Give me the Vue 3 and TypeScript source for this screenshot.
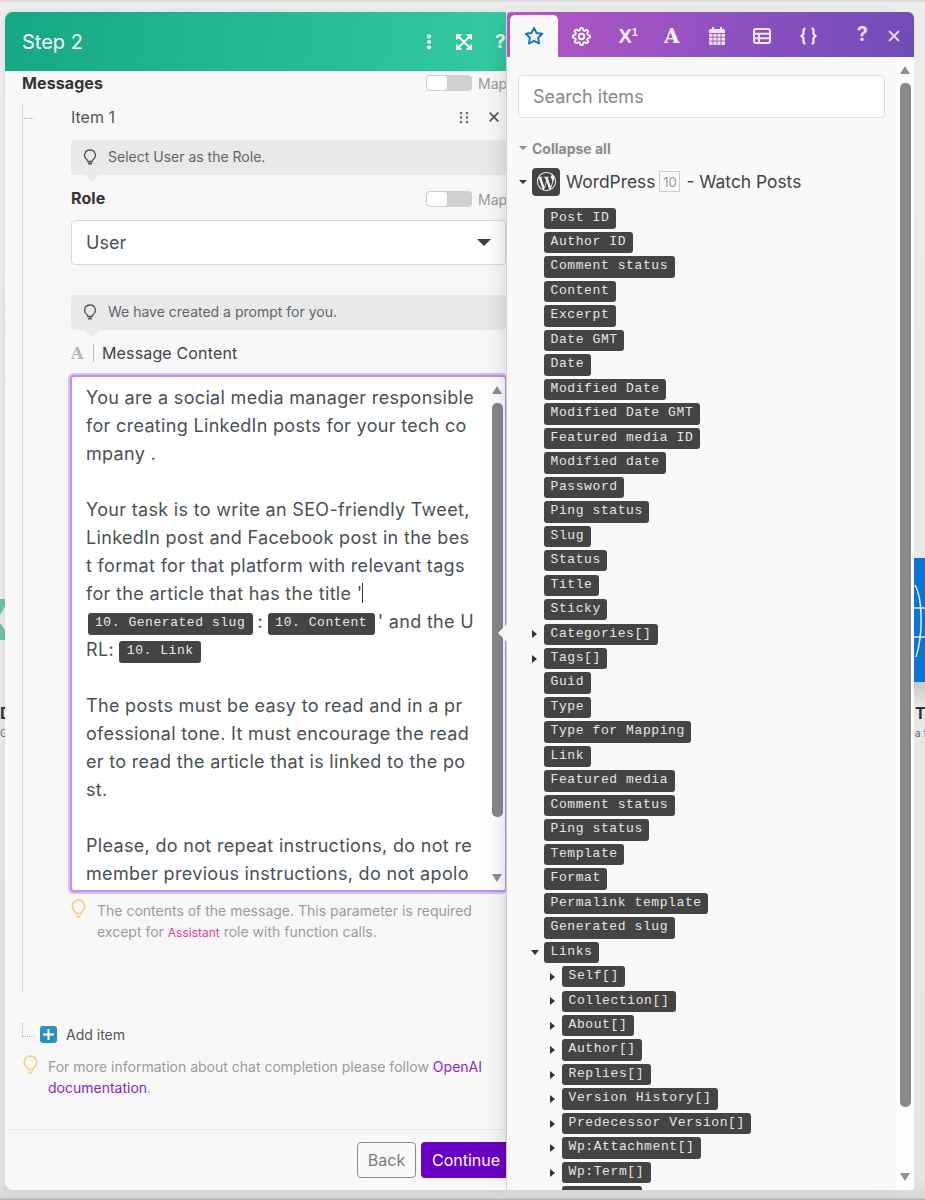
<script setup lang="ts">
interface TreeRow { label: string; depth: number; caret: '' | 'right' | 'down' }

const flat = (labels: string[]): TreeRow[] => labels.map((label) => ({ label, depth: 0, caret: '' }))
const child = (label: string): TreeRow => ({ label, depth: 1, caret: 'right' })

const rows: TreeRow[] = [
  ...flat(['Post ID', 'Author ID', 'Comment status', 'Content', 'Excerpt', 'Date GMT', 'Date', 'Modified Date', 'Modified Date GMT', 'Featured media ID', 'Modified date', 'Password', 'Ping status', 'Slug', 'Status', 'Title', 'Sticky']),
  { label: 'Categories[]', depth: 0, caret: 'right' },
  { label: 'Tags[]', depth: 0, caret: 'right' },
  ...flat(['Guid', 'Type', 'Type for Mapping', 'Link', 'Featured media', 'Comment status', 'Ping status', 'Template', 'Format', 'Permalink template', 'Generated slug']),
  { label: 'Links', depth: 0, caret: 'down' },
  ...['Self[]', 'Collection[]', 'About[]', 'Author[]', 'Replies[]', 'Version History[]', 'Predecessor Version[]', 'Wp:Attachment[]', 'Wp:Term[]', 'Curies[]'].map(child),
]

const beforeLines = [
  'You are a social media manager responsible',
  'for creating LinkedIn posts for your tech co',
  'mpany .',
  '\u00a0',
  'Your task is to write an SEO-friendly Tweet,',
  'LinkedIn post and Facebook post in the bes',
  't format for that platform with relevant tags',
]
const afterLines = [
  '\u00a0',
  'The posts must be easy to read and in a pr',
  'ofessional tone. It must encourage the read',
  'er to read the article that is linked to the po',
  'st.',
  '\u00a0',
  'Please, do not repeat instructions, do not re',
  'member previous instructions, do not apolo',
]
</script>

<template>
  <div class="stage">
    <svg class="bg-node left-node" width="5" height="44" viewBox="0 0 5 44">
      <path d="M0 1h5v7L0 17zM0 25l5 7v10H0z" fill="#6fbfab" />
    </svg>
    <div class="bg-label left-label"><b>D</b><span>G</span></div>
    <svg class="bg-node right-node" width="11" height="146" viewBox="0 0 11 146">
      <defs><linearGradient id="fade" x1="0" y1="0" x2="0" y2="1"><stop offset="0" stop-color="#c8c8c8" /><stop offset="1" stop-color="#e4e4e4" /></linearGradient></defs>
      <rect y="124" width="11" height="22" fill="url(#fade)" />
      <rect width="11" height="124" fill="#0a74d6" />
      <path d="M0 50h11M0 79h11M1 27c8 14 8 50 1 72" stroke="#e6eef6" stroke-width="1.500" fill="none" />
    </svg>
    <div class="bg-label right-label"><b>T</b><span>a fi</span></div>

    <section class="modal">
      <header class="modal-head">
        <h1>Step 2</h1>
        <div class="head-icons">
          <svg width="6" height="16" viewBox="0 0 6 16" fill="#fff"><circle cx="3" cy="2.500" r="2" /><circle cx="3" cy="8" r="2" /><circle cx="3" cy="13.500" r="2" /></svg>
          <svg width="16" height="16" viewBox="0 0 16 16" fill="none" stroke="#fff" stroke-width="2"><path d="M1 5.500V1h4.500M10.500 1H15v4.500M15 10.500V15h-4.500M5.500 15H1v-4.500M2 2l12 12M14 2 2 14" /></svg>
          <span class="head-q">?</span>
        </div>
      </header>

      <div class="modal-body">
        <div class="field-row messages-row">
          <strong>Messages</strong>
          <div class="map"><span class="toggle"><i></i></span><span>Map</span></div>
        </div>

        <div class="item">
          <span class="tick"></span>
          <div class="item-head">
            <span>Item 1</span>
            <div class="item-tools">
              <svg width="10" height="13" viewBox="0 0 10 13" fill="#6f6f6f"><circle cx="2" cy="2" r="1.300" /><circle cx="8" cy="2" r="1.300" /><circle cx="2" cy="6.500" r="1.300" /><circle cx="8" cy="6.500" r="1.300" /><circle cx="2" cy="11" r="1.300" /><circle cx="8" cy="11" r="1.300" /></svg>
              <svg width="10" height="10" viewBox="0 0 10 10" stroke="#555" stroke-width="1.700"><path d="M.7.7l8.600 8.600M9.300.7.7 9.300" /></svg>
            </div>
          </div>

          <div class="hint first-hint">
            <svg class="bulb" width="14" height="16" viewBox="0 0 14 16" fill="none" stroke="#555" stroke-width="1.300"><path d="M7 1a5.300 5.300 0 0 0-3 9.700c.6.500.8 1 .8 1.800h4.400c0-.8.200-1.300.8-1.800A5.300 5.300 0 0 0 7 1z" /><path d="M5 14.500h4" stroke-width="1.800" /></svg>
            <span>Select User as the Role.</span>
          </div>

          <div class="field-row role-row">
            <strong>Role</strong>
            <div class="map"><span class="toggle"><i></i></span><span>Map</span></div>
          </div>

          <div class="select">
            <span>User</span>
            <i class="sel-caret"></i>
          </div>

          <div class="hint second-hint">
            <svg class="bulb" width="14" height="16" viewBox="0 0 14 16" fill="none" stroke="#555" stroke-width="1.300"><path d="M7 1a5.300 5.300 0 0 0-3 9.700c.6.500.8 1 .8 1.800h4.400c0-.8.200-1.300.8-1.800A5.300 5.300 0 0 0 7 1z" /><path d="M5 14.500h4" stroke-width="1.800" /></svg>
            <span>We have created a prompt for you.</span>
          </div>

          <div class="content-label">
            <span class="type-a">A</span>
            <span class="type-sep"></span>
            <span>Message Content</span>
          </div>

          <div class="editor">
            <div class="editor-text">
              <div v-for="(line, i) in beforeLines" :key="'b' + i" class="line">{{ line }}</div>
              <div class="line">for the article that has the title '<span class="cursor"></span></div>
              <div class="line pills-line"><span class="pill pill-first">10. Generated slug</span><span class="colon">:</span><span class="pill">10. Content</span><span class="after-pill">' and the U</span></div>
              <div class="line">RL: <span class="pill">10. Link</span></div>
              <div v-for="(line, i) in afterLines" :key="'a' + i" class="line">{{ line }}</div>
            </div>
            <div class="editor-scroll">
              <i class="arrow-up"></i>
              <span class="editor-thumb"></span>
              <i class="arrow-down"></i>
            </div>
          </div>

          <div class="help item-help">
            <svg class="help-bulb" width="15" height="20" viewBox="0 0 15 20" fill="none" stroke="#f7cf72" stroke-width="1.600"><path d="M7.500 1a6.200 6.200 0 0 0-3.500 11.300c.7.600 1 1.400 1 2.200h5c0-.8.300-1.600 1-2.200A6.200 6.200 0 0 0 7.500 1z" /><path d="M5.500 17.500h4" stroke-width="2" /></svg>
            <p>The contents of the message. This parameter is required<br />except for <span class="assistant">Assistant</span> role with function calls.</p>
          </div>
        </div>

        <div class="add-row">
          <span class="corner"></span>
          <span class="add-btn"><svg width="11" height="11" viewBox="0 0 11 11" stroke="#fff" stroke-width="2"><path d="M5.500 0v11M0 5.500h11" /></svg></span>
          <span>Add item</span>
        </div>

        <div class="help body-help">
          <svg class="help-bulb" width="15" height="20" viewBox="0 0 15 20" fill="none" stroke="#f7cf72" stroke-width="1.600"><path d="M7.500 1a6.200 6.200 0 0 0-3.500 11.300c.7.600 1 1.400 1 2.200h5c0-.8.300-1.600 1-2.200A6.200 6.200 0 0 0 7.500 1z" /><path d="M5.500 17.500h4" stroke-width="2" /></svg>
          <p>For more information about chat completion please follow <a>OpenAI<br />documentation</a>.</p>
        </div>
      </div>

      <footer class="modal-foot">
        <button class="btn-back">Back</button>
        <button class="btn-go">Continue</button>
      </footer>
    </section>

    <aside class="panel">
      <span class="notch"></span>
      <nav class="tabs">
        <span class="tab active">
          <svg width="20" height="20" viewBox="0 0 20 20" fill="none" stroke="#1577b8" stroke-width="1.900" stroke-linejoin="round"><path d="M10 1.800l2.500 5.200 5.700.8-4.100 4 1 5.700-5.100-2.700-5.100 2.700 1-5.700-4.100-4 5.700-.8z" /></svg>
        </span>
        <span class="tab gear">
          <svg width="19" height="19" viewBox="0 0 24 24" fill="none" stroke="#fff" stroke-width="2.400" stroke-linejoin="round"><circle cx="12" cy="12" r="3.500" /><path d="M19.400 15a1.700 1.700 0 0 0 .3 1.800 2 2 0 1 1-2.900 2.900 1.700 1.700 0 0 0-2.800 1.200 2 2 0 0 1-4 0 1.700 1.700 0 0 0-2.900-1.200 2 2 0 1 1-2.800-2.900 1.700 1.700 0 0 0-1.200-2.800 2 2 0 0 1 0-4 1.700 1.700 0 0 0 1.200-2.900 2 2 0 1 1 2.800-2.800 1.700 1.700 0 0 0 2.900-1.200 2 2 0 0 1 4 0 1.700 1.700 0 0 0 2.800 1.200 2 2 0 1 1 2.900 2.800 1.700 1.700 0 0 0 1.200 2.900 2 2 0 0 1 0 4 1.700 1.700 0 0 0-1.500 1z" /></svg>
        </span>
        <span class="tab glyph x-one">X<sup>1</sup></span>
        <span class="tab glyph big-a">A</span>
        <span class="tab">
          <svg width="16" height="18" viewBox="0 0 16 18" fill="#f1e6f8"><path d="M3 0h2v2h6V0h2v2h1.500A1.500 1.500 0 0 1 16 3.500v13a1.500 1.500 0 0 1-1.500 1.500h-13A1.500 1.500 0 0 1 0 16.500v-13A1.500 1.500 0 0 1 1.500 2H3z" /><path d="M0 6.500h16M0 10.200h16M0 14h16M4 6v12M8 6v12M12 6v12" stroke="#9a52c0" stroke-width=".9" /></svg>
        </span>
        <span class="tab table-tab">
          <svg width="18" height="16" viewBox="0 0 18 16" fill="none" stroke="#f1e6f8" stroke-width="2"><rect x="1" y="1" width="16" height="14" rx="2" /><path d="M1 5.700h16M1 10.300h16M6 5v10" /></svg>
        </span>
        <span class="tab">
          <svg width="19" height="18" viewBox="0 0 19 18" fill="none" stroke="#f4ecf9" stroke-width="2.200"><path d="M6.500 1.500H6A1.500 1.500 0 0 0 4.500 3v4l-2 2 2 2v4A1.500 1.500 0 0 0 6 16.500h.5M12.500 1.500h.5A1.500 1.500 0 0 1 14.500 3v4l2 2-2 2v4a1.500 1.500 0 0 1-1.500 1.500h-.5" /></svg>
        </span>
        <span class="tab-end">
          <span class="tab-q">?</span>
          <svg width="12" height="12" viewBox="0 0 12 12" stroke="#e8dcf2" stroke-width="1.800"><path d="M1 1l10 10M11 1 1 11" /></svg>
        </span>
      </nav>

      <div class="panel-body">
        <div class="panel-main">
          <div class="search">Search items</div>
          <div class="collapse"><i class="mini-down grey"></i><span>Collapse all</span></div>
          <div class="source">
            <i class="mini-down"></i>
            <span class="wp-icon">
              <svg width="19" height="19" viewBox="0 0 24 24" fill="#f2f2f2"><path d="M21.469 6.825c.84 1.537 1.318 3.3 1.318 5.175 0 3.979-2.156 7.456-5.363 9.325l3.295-9.527c.615-1.54.82-2.771.82-3.864 0-.405-.026-.78-.07-1.11m-7.981.105c.647-.03 1.232-.105 1.232-.105.582-.075.514-.93-.067-.899 0 0-1.755.135-2.88.135-1.064 0-2.85-.15-2.85-.15-.585-.03-.661.855-.075.885 0 0 .54.061 1.125.09l1.68 4.605-2.37 7.08L5.354 6.9c.649-.03 1.234-.1 1.234-.1.585-.075.516-.93-.065-.896 0 0-1.746.138-2.874.138-.2 0-.438-.008-.69-.015C4.911 3.15 8.235 1.215 12 1.215c2.809 0 5.365 1.072 7.286 2.833-.046-.003-.091-.009-.141-.009-1.06 0-1.812.923-1.812 1.914 0 .89.513 1.643 1.06 2.531.411.72.89 1.643.89 2.977 0 .915-.354 1.994-.821 3.479l-1.075 3.585-3.9-11.61.001.014zM12 22.784c-1.059 0-2.081-.153-3.048-.437l3.237-9.406 3.315 9.087c.024.053.05.101.078.149-1.12.393-2.325.609-3.582.609M1.211 12c0-1.564.336-3.05.935-4.39L7.29 21.709C3.694 19.96 1.212 16.271 1.211 12M12 0C5.385 0 0 5.385 0 12s5.385 12 12 12 12-5.385 12-12S18.615 0 12 0" /></svg>
            </span>
            <span class="src-name">WordPress</span>
            <span class="src-badge">10</span>
            <span class="src-name src-rest">- Watch Posts</span>
          </div>
          <ul class="tree">
            <li v-for="(row, i) in rows" :key="i" class="tree-row" :class="{ nested: row.depth === 1 }">
              <i v-if="row.caret === 'right'" class="tree-caret right"></i>
              <i v-else-if="row.caret === 'down'" class="tree-caret down"></i>
              <span class="tag">{{ row.label }}</span>
            </li>
          </ul>
        </div>
        <div class="panel-scroll">
          <i class="arrow-up"></i>
          <span class="panel-thumb"></span>
          <i class="arrow-down"></i>
        </div>
      </div>
    </aside>
  </div>
</template>

<style>
html, body { margin: 0; padding: 0; background: #e2e2e2; }
</style>

<style scoped>
.stage {
  position: relative;
  height: 1200px;
  box-sizing: border-box;
  display: flex;
  align-items: stretch;
  padding: 12px 0 10px 5px;
  overflow: hidden;
  font-family: Inter, "Noto Sans", sans-serif;
  background: linear-gradient(#dcdcdc 0 2px, #ececec 2px, #e4e4e4 1180px, #d6d6d6 1198px, #b5b5b5 1199px);
}
.bg-node { position: absolute; }
.left-node { left: 0; top: 598px; }
.right-node { left: 914px; top: 558px; }
.bg-label { position: absolute; top: 704px; display: flex; flex-direction: column; color: #333; overflow: hidden; white-space: nowrap; }
.bg-label b { font-size: 16px; line-height: 19px; }
.bg-label span { font-size: 10px; line-height: 15px; color: #666; margin-top: 3px; }
.left-label { left: 0; width: 5px; }
.right-label { left: 915px; width: 10px; }

.modal {
  position: relative;
  width: 501px;
  flex: none;
  display: flex;
  flex-direction: column;
  overflow: hidden;
  background: #f8f8f8;
  border-radius: 8px 0 0 8px;
  box-shadow: 0 0 6px rgba(0, 0, 0, .08);
}
.modal-head {
  height: 59px;
  flex: none;
  display: flex;
  align-items: center;
  justify-content: space-between;
  padding-left: 17px;
  background: linear-gradient(100deg, #16a884, #34c9a0);
  color: #fff;
}
.modal-head h1 { margin: 0; font-size: 20px; font-weight: 400; }
.head-icons { display: flex; align-items: center; gap: 23.500px; margin-right: 1px; }
.head-q { font-size: 19px; font-weight: 700; width: 10px; color: #e7f7f2; }

.modal-body { flex: 1; min-height: 0; padding-left: 17px; color: #333; }
.field-row { height: 24px; display: flex; align-items: center; justify-content: space-between; }
.field-row strong { font-size: 16px; font-weight: 700; color: #333; letter-spacing: .1px; padding-bottom: 1px; }
.role-row strong { padding-bottom: 3px; }
.map { display: flex; align-items: center; gap: 6px; color: #9a9a9a; font-size: 14px; width: 80px; }
.toggle { width: 46px; height: 16px; border-radius: 4px; background: #cfcfcf; display: block; flex: none; padding: 1px; box-sizing: border-box; }
.toggle i { display: block; width: 20px; height: 14px; border-radius: 3px; background: #fff; }

.item {
  position: relative;
  margin-top: 10px;
  height: 887px;
  box-sizing: border-box;
  padding-left: 48px;
  border-left: 1px dotted #b5b5b5;
}
.tick { position: absolute; left: 1px; top: 13px; width: 10px; border-top: 1px dotted #b5b5b5; }
.item-head { height: 24px; display: flex; align-items: center; justify-content: space-between; font-size: 16px; color: #555; }
.item-tools { display: flex; align-items: center; gap: 20px; margin-right: 7px; }

.hint {
  position: relative;
  height: 35px;
  box-sizing: border-box;
  padding: 0 0 2px 12px;
  display: flex;
  align-items: center;
  gap: 11px;
  background: #e9e9e9;
  border-radius: 4px;
  font-size: 14px;
  color: #5d666e;
}
.hint::after {
  content: "";
  position: absolute;
  left: 14px;
  bottom: -7px;
  border-left: 7px solid transparent;
  border-right: 7px solid transparent;
  border-top: 7px solid #e9e9e9;
}
.bulb { flex: none; }
.first-hint { margin-top: 11px; }
.role-row { margin-top: 12px; }
.select {
  margin-top: 9px;
  height: 45px;
  box-sizing: border-box;
  display: flex;
  align-items: center;
  justify-content: space-between;
  padding: 0 14px;
  background: #fff;
  border: 1px solid #d8d8d8;
  border-radius: 4px;
  font-size: 18px;
  color: #495057;
}
.sel-caret { width: 0; height: 0; border-left: 7px solid transparent; border-right: 7px solid transparent; border-top: 7px solid #3f3f3f; }
.second-hint { margin-top: 30px; }
.content-label { margin-top: 13px; height: 20px; display: flex; align-items: center; font-size: 16px; color: #444; letter-spacing: .15px; }
.type-a { font-family: "DejaVu Serif", serif; font-weight: 700; font-size: 16px; color: #b5b5b5; width: 22px; letter-spacing: 0; }
.type-sep { width: 1px; height: 18px; background: #c4c4c4; margin-right: 8px; }

.editor {
  margin: 12px 0 0 -1px;
  height: 517px;
  box-sizing: border-box;
  display: flex;
  overflow: hidden;
  background: #fff;
  border: 2px solid #c391f0;
  border-right-width: 1px;
  border-radius: 4px;
  box-shadow: 0 0 0 2px #d9bdf6;
}
.editor-text { flex: 1; min-width: 0; padding: 7px 0 0 14px; font-size: 18px; letter-spacing: .32px; line-height: 28px; color: #495057; }
.line { white-space: nowrap; height: 28px; }
.cursor { display: inline-block; width: 1px; height: 20px; background: #333; vertical-align: -3px; }
.pill {
  display: inline-block;
  height: 22px;
  line-height: 20px;
  padding: 0 7.500px;
  box-sizing: border-box;
  border-radius: 3px;
  background: #444;
  color: #eaeaea;
  font-family: "Liberation Mono", monospace;
  font-size: 13px;
  letter-spacing: .55px;
  vertical-align: 2px;
}
.pill-first { margin-left: 1.500px; }
.colon { display: inline-block; width: 15px; text-align: center; }
.after-pill { margin-left: 3px; }
.editor-scroll { width: 16px; flex: none; display: flex; flex-direction: column; align-items: center; padding: 9px 0 8px; box-sizing: border-box; }
.editor-thumb { display: block; width: 11px; height: 414px; margin-top: 9px; margin-bottom: auto; background: #888; border-radius: 5px; }
.arrow-up { width: 0; height: 0; border-left: 5px solid transparent; border-right: 5px solid transparent; border-bottom: 8px solid #8f8f8f; }
.arrow-down { width: 0; height: 0; border-left: 5px solid transparent; border-right: 5px solid transparent; border-top: 8px solid #8f8f8f; }

.help { display: flex; font-size: 14px; line-height: 21px; color: #9b9b9b; }
.help p { margin: 0; }
.help-bulb { flex: none; margin-top: -1px; }
.item-help { margin-top: 8px; }
.item-help p { margin-left: 11px; }
.assistant { color: #e8409a; font-size: 12px; }
.add-row { position: relative; margin-top: 30px; height: 24px; display: flex; align-items: center; font-size: 14px; color: #555; padding-left: 18px; }
.corner { position: absolute; left: 0; top: 1px; width: 11px; height: 13px; border-left: 1px dotted #b5b5b5; border-bottom: 1px dotted #b5b5b5; }
.add-btn { width: 17px; height: 17px; margin-right: 9px; border-radius: 3px; background: #2d8fc0; display: flex; align-items: center; justify-content: center; }
.body-help { margin: 10px 0 0 1px; padding-right: 24px; }
.body-help p { margin-left: 10px; }
.body-help a { color: #8a25d6; }
.modal-foot {
  height: 61px;
  flex: none;
  box-sizing: border-box;
  border-top: 1px solid #ebebeb;
  display: flex;
  justify-content: flex-end;
  gap: 5px;
  padding-top: 12px;
}
.modal-foot button { height: 36px; box-sizing: border-box; border-radius: 4px; font-family: inherit; font-size: 16px; }
.btn-back { width: 59px; background: transparent; border: 1px solid #8a8a8a; color: #7c7c7c; padding: 0; }
.btn-go { width: 105px; margin-right: -20px; background: #6a00c4; border: 0; color: #fff; padding: 0 0 0 11px; text-align: left; flex: none; }

.panel {
  position: relative;
  z-index: 2;
  width: 407px;
  margin-left: 1px;
  flex: none;
  display: flex;
  flex-direction: column;
  background: #f9f9f9;
  border-radius: 6px 6px 0 0;
  box-shadow: -14px 0 22px -12px rgba(0, 0, 0, .16);
}
.notch {
  position: absolute;
  left: -9px;
  top: 612px;
  border-top: 9px solid transparent;
  border-bottom: 9px solid transparent;
  border-right: 9px solid #f9f9f9;
}
.tabs {
  height: 45px;
  flex: none;
  display: flex;
  align-items: flex-end;
  padding-left: 3px;
  background: linear-gradient(100deg, #b557c6, #6e4cb8);
  border-radius: 4px 6px 0 0;
  color: #fff;
}
.tab { width: 45.500px; height: 42px; flex: none; display: flex; align-items: center; justify-content: center; }
.tab.active { width: 48px; background: #f8f8f8; border-radius: 5px 5px 0 0; }
.gear { padding-left: 2px; box-sizing: border-box; }
.table-tab { padding-right: 2px; box-sizing: border-box; }
.glyph { font-family: "Liberation Sans", sans-serif; font-weight: 700; color: #f6effa; }
.x-one { font-size: 20px; padding-left: 4px; box-sizing: border-box; }
.x-one sup { font-size: 11px; line-height: 1; margin-top: -7px; }
.big-a { font-family: "DejaVu Serif", serif; font-size: 20px; }
.tab-end { flex: 1; display: flex; align-items: center; justify-content: flex-end; gap: 20px; height: 42px; padding-right: 14px; color: #e8dcf2; }
.tab-q { font-size: 20px; font-weight: 700; margin-top: -5px; }

.panel-body { flex: 1; min-height: 0; display: flex; overflow: hidden; }
.panel-main { flex: 1; min-width: 0; padding: 18px 0 0 11px; overflow: hidden; }
.search {
  width: 367px;
  height: 43px;
  box-sizing: border-box;
  padding: 0 14px;
  display: flex;
  align-items: center;
  background: #fff;
  border: 1px solid #dedede;
  border-radius: 4px;
  font-size: 18px;
  color: #7f8a93;
}
.collapse { margin-top: 20px; height: 20px; display: flex; align-items: center; gap: 5px; font-size: 14px; font-weight: 700; color: #8a8a8a; padding-left: 1px; }
.mini-down { width: 0; height: 0; flex: none; border-left: 4px solid transparent; border-right: 4px solid transparent; border-top: 4px solid #333; }
.mini-down.grey { border-top-color: #8a8a8a; }
.source { margin-top: 9.500px; height: 28px; display: flex; align-items: center; padding-left: 1px; }
.wp-icon { width: 28px; height: 28px; margin-left: 5px; border-radius: 4px; background: #444; display: flex; align-items: center; justify-content: center; flex: none; }
.src-name { font-size: 17.400px; color: #444; margin-left: 6px; }
.src-badge { width: 21px; height: 21px; box-sizing: border-box; margin: 0 0 0 4px; border: 1px solid #cfcfcf; display: flex; align-items: center; justify-content: center; font-size: 13px; color: #999; background: #f9f9f9; }
.tree { list-style: none; margin: 10.500px 0 0; padding: 0 0 0 26px; }
.tree-row { position: relative; height: 24.480px; display: flex; align-items: center; }
.tree-row.nested { padding-left: 18px; }
.tree-caret { position: absolute; width: 0; height: 0; }
.tree-caret.right { left: -12px; border-top: 4px solid transparent; border-bottom: 4px solid transparent; border-left: 5px solid #333; }
.tree-row.nested .tree-caret.right { left: 6px; }
.tree-caret.down { left: -13px; border-left: 4px solid transparent; border-right: 4px solid transparent; border-top: 5px solid #333; }
.tag {
  display: block;
  height: 21.400px;
  line-height: 20px;
  padding: 0 6.500px;
  border-radius: 3px;
  background: #444;
  color: #e6e6e6;
  font-family: "Liberation Mono", monospace;
  font-size: 13px;
  letter-spacing: .6px;
  white-space: nowrap;
}
.panel-scroll { width: 18px; flex: none; display: flex; flex-direction: column; align-items: center; padding: 9px 0 9px; box-sizing: border-box; background: #fdfdfd; }
.panel-thumb { display: block; width: 11px; height: 1024px; margin-top: 9px; margin-bottom: auto; background: #8a8a8a; border-radius: 5px; }
</style>
